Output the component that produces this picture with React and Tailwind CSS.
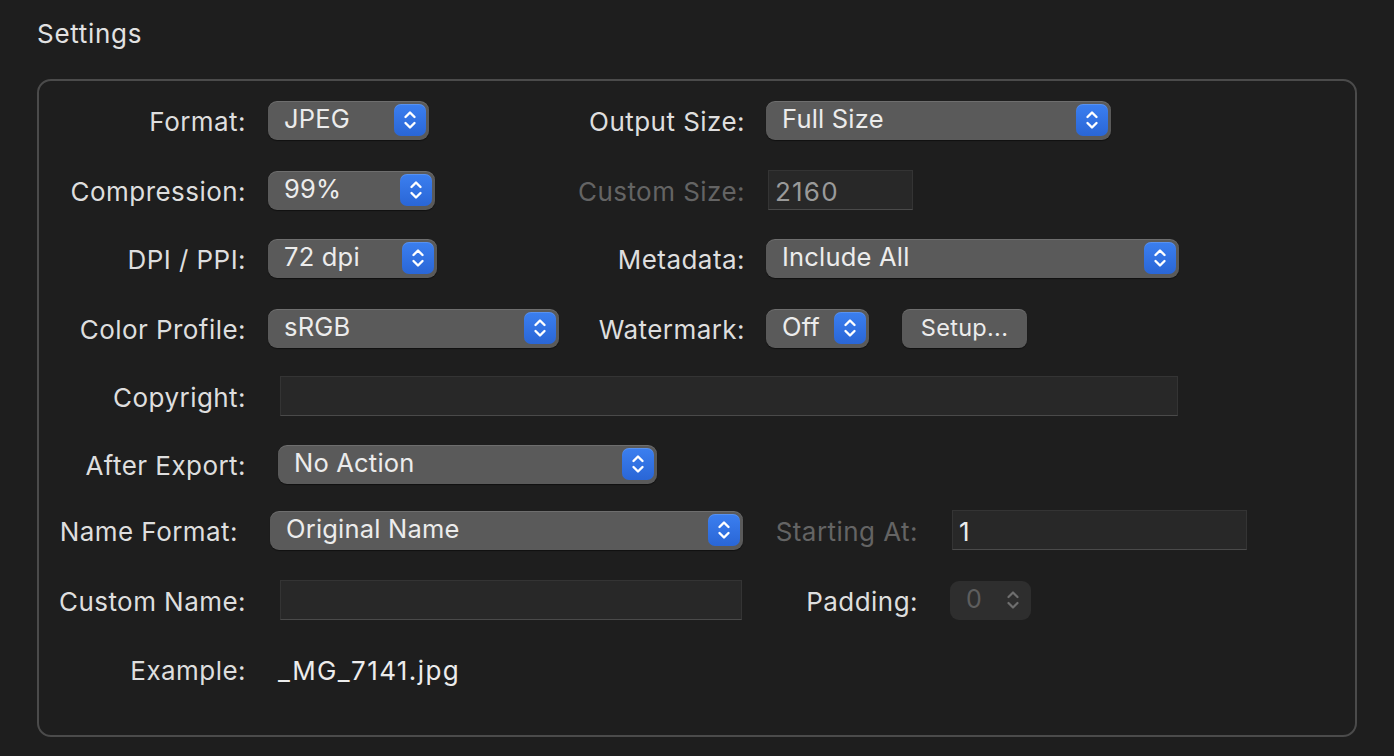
import React from 'react';

const font = { fontFamily: 'Inter, "Noto Sans", sans-serif' };

function Chevrons({ color = 'white', width = 2.4 }) {
  return (
    <svg width="16" height="26" viewBox="0 0 16 26" fill="none">
      <path d="M3.5 10 L8 5.5 L12.5 10" stroke={color} strokeWidth={width} strokeLinecap="round" strokeLinejoin="round" />
      <path d="M3.5 16 L8 20.5 L12.5 16" stroke={color} strokeWidth={width} strokeLinecap="round" strokeLinejoin="round" />
    </svg>
  );
}

function Popup({ value, className }) {
  return (
    <div className={`h-[39px] flex items-center justify-between rounded-[9px] bg-[#5a5a5a] shadow-[inset_0_1px_0_rgba(255,255,255,0.12),0_1px_1px_rgba(0,0,0,0.45)] pl-[16px] pr-[3px] ${className}`}>
      <span className="text-[#ececec] text-[25.5px] tracking-[0.2px] leading-none -mt-[2px]">{value}</span>
      <div className="w-[32px] h-[32px] rounded-[7px] bg-gradient-to-b from-[#3b7ff0] to-[#2a66d6] flex items-center justify-center shadow-[inset_0_1px_0_rgba(255,255,255,0.15)]">
        <Chevrons />
      </div>
    </div>
  );
}

function Field({ value, className, dim }) {
  return (
    <div className={`h-[40px] flex items-center bg-[#282828] border border-[#343434] border-b-[#4a4a4a] px-[6px] ${className}`}>
      {value && (
        <span className={`text-[26px] tracking-[1.2px] leading-none mt-[3px] ${dim ? 'text-[#9a9a9a]' : 'text-[#ececec]'}`}>{value}</span>
      )}
    </div>
  );
}

function Label({ children, className, dim }) {
  return (
    <div className={`text-right text-[26px] tracking-[0.45px] leading-none shrink-0 mt-[4px] ${dim ? 'text-[#646464]' : 'text-[#dedede]'} ${className}`}>
      {children}
    </div>
  );
}

export default function App() {
  return (
    <div className="w-[1394px] h-[756px] bg-[#1e1e1e] px-[37px] pt-[18px] overflow-hidden" style={font}>
      <h2 className="text-[26px] tracking-[0.7px] leading-[32px] text-[#e2e2e2]">Settings</h2>

      <div className="mt-[29px] h-[658px] border-2 border-[#4b4b4b] rounded-[14px]">
        {/* Format / Output Size */}
        <div className="mt-[19px] h-[40px] flex items-center">
          <Label className="w-[207px]">Format:</Label>
          <Popup value="JPEG" className="ml-[22px] w-[161px]" />
          <Label className="w-[316px]">Output Size:</Label>
          <Popup value="Full Size" className="ml-[21px] w-[345px]" />
        </div>

        {/* Compression / Custom Size */}
        <div className="mt-[30px] h-[40px] flex items-center">
          <Label className="w-[207px]">Compression:</Label>
          <Popup value="99%" className="ml-[22px] w-[167px]" />
          <Label className="w-[310px]" dim>Custom Size:</Label>
          <Field value="2160" dim className="ml-[23px] w-[145px] bg-[#232323] border-[#2e2e2e] border-b-[#3c3c3c]" />
        </div>

        {/* DPI / Metadata */}
        <div className="mt-[28px] h-[40px] flex items-center">
          <Label className="w-[207px]">DPI / PPI:</Label>
          <Popup value="72 dpi" className="ml-[22px] w-[169px]" />
          <Label className="w-[308px]">Metadata:</Label>
          <Popup value="Include All" className="ml-[21px] w-[413px]" />
        </div>

        {/* Color Profile / Watermark */}
        <div className="mt-[30px] h-[40px] flex items-center">
          <Label className="w-[207px]">Color Profile:</Label>
          <Popup value="sRGB" className="ml-[22px] w-[291px]" />
          <Label className="w-[186px]">Watermark:</Label>
          <Popup value="Off" className="ml-[21px] w-[103px]" />
          <button className="ml-[33px] w-[125px] h-[39px] rounded-[8px] bg-[#5a5a5a] shadow-[inset_0_1px_0_rgba(255,255,255,0.12),0_1px_1px_rgba(0,0,0,0.45)] text-[#ececec] text-[23.5px] tracking-[0.3px] leading-none">
            Setup...
          </button>
        </div>

        {/* Copyright */}
        <div className="mt-[28px] h-[40px] flex items-center">
          <Label className="w-[207px]">Copyright:</Label>
          <Field className="ml-[34px] w-[898px]" />
        </div>

        {/* After Export */}
        <div className="mt-[28px] h-[40px] flex items-center">
          <Label className="w-[207px]">After Export:</Label>
          <Popup value="No Action" className="ml-[32px] w-[379px]" />
        </div>

        {/* Name Format / Starting At */}
        <div className="mt-[26px] h-[40px] flex items-center">
          <Label className="w-[199px]">Name Format:</Label>
          <Popup value="Original Name" className="ml-[32px] w-[473px]" />
          <Label className="w-[175px]" dim>Starting At:</Label>
          <Field value="1" className="ml-[34px] w-[295px] bg-[#232323] border-[#2e2e2e] border-b-[#3c3c3c]" />
        </div>

        {/* Custom Name / Padding */}
        <div className="mt-[30px] h-[40px] flex items-center">
          <Label className="w-[207px]">Custom Name:</Label>
          <Field className="ml-[34px] w-[462px]" />
          <Label className="w-[176px]">Padding:</Label>
          <div className="ml-[32px] w-[81px] h-[39px] rounded-[9px] bg-[#2e2e2e] flex items-center justify-between pl-[16px] pr-[10px]">
            <span className="text-[25px] leading-none text-[#5e5e5e] -mt-[2px]">0</span>
            <Chevrons color="#6e6e6e" width={2.2} />
          </div>
        </div>

        {/* Example */}
        <div className="mt-[29px] h-[40px] flex items-center">
          <Label className="w-[207px]">Example:</Label>
          <span className="ml-[32px] mt-[4px] text-[26px] tracking-[1.4px] leading-none text-[#ececec]">_MG_7141.jpg</span>
        </div>
      </div>
    </div>
  );
}
